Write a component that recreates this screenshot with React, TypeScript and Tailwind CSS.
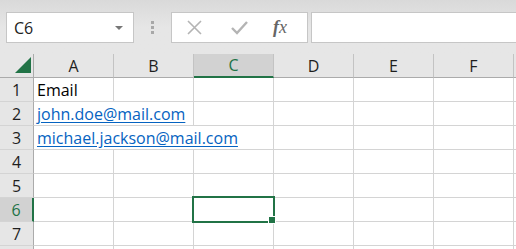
const COLS = ['A', 'B', 'C', 'D', 'E', 'F', ''];

const font = { fontFamily: '"Open Sans", "Noto Sans", Arial, sans-serif' };

function HeaderCell({ label, active }: { label: string; active?: boolean }) {
  return (
    <div
      className={`flex items-center justify-center border-r border-[#c3c3c3] text-[16px] text-[#1e1e1e] ${
        active ? 'bg-[#d2d2d2] border-b-2 border-b-[#217346]' : 'bg-[#e6e6e6] border-b border-b-[#ababab]'
      }`}
    >
      <span className={active ? 'text-[#217346]' : ''}>{label}</span>
    </div>
  );
}

function RowHeader({ n, active }: { n: number; active?: boolean }) {
  return (
    <div
      className={`flex items-center justify-center border-b border-[#d4d4d4] text-[16px] ${
        active
          ? 'bg-[#d2d2d2] border-r-2 border-r-[#217346] text-[#217346]'
          : 'bg-[#e6e6e6] border-r border-r-[#ababab] text-[#1e1e1e]'
      }`}
    >
      {n < 8 ? n : ''}
    </div>
  );
}

function Cell({ span = 1, children, selected }: { span?: number; children?: React.ReactNode; selected?: boolean }) {
  const spanCls = span === 3 ? 'col-span-3' : span === 2 ? 'col-span-2' : '';
  return (
    <div className={`relative flex items-center overflow-visible border-r border-b border-[#d4d4d4] bg-white pl-[3px] text-[16px] ${spanCls}`}>
      {children}
      {selected && (
        <div className="absolute -top-[2px] -left-[2px] -right-[2px] -bottom-[2px] z-10 border-2 border-[#217346]">
          <div className="absolute -right-[3px] -bottom-[3px] h-[6px] w-[6px] border border-white bg-[#217346] box-content" />
        </div>
      )}
    </div>
  );
}

function Link({ children }: { children: React.ReactNode }) {
  return <span className="whitespace-nowrap text-[#0563c1] underline underline-offset-2">{children}</span>;
}

function Toolbar() {
  return (
    <div className="flex h-[54px] items-start bg-gradient-to-b from-[#d9d9d9] via-[#e6e6e6] to-[#e6e6e6] pt-[12px]">
      <div className="ml-[6px] flex h-[31px] w-[128px] items-center justify-between border border-[#c6c6c6] bg-white pl-[7px] pr-[10px] text-[16px] text-[#222]">
        <span>C6</span>
        <svg width="8" height="4" viewBox="0 0 8 4">
          <path d="M0 0 L8 0 L4 4 Z" fill="#777" />
        </svg>
      </div>
      <div className="ml-[16px] flex h-[31px] w-[4px] flex-col items-center justify-center gap-[2px]">
        <div className="h-[3px] w-[3px] bg-[#a8a8a8]" />
        <div className="h-[3px] w-[3px] bg-[#a8a8a8]" />
        <div className="h-[3px] w-[3px] bg-[#a8a8a8]" />
      </div>
      <div className="ml-[17px] flex h-[31px] w-[137px] items-center border border-[#c6c6c6] bg-white">
        <svg className="ml-[15px]" width="15" height="15" viewBox="0 0 15 15">
          <path d="M1 1 L14 14 M14 1 L1 14" stroke="#b4b4b4" strokeWidth="1.6" />
        </svg>
        <svg className="ml-[29px]" width="17" height="14" viewBox="0 0 17 14">
          <path d="M1 7 L6 12 L16 1" stroke="#b4b4b4" strokeWidth="2.4" fill="none" />
        </svg>
        <span
          className="ml-[25px] text-[18px] italic text-[#666]"
          style={{ fontFamily: '"Liberation Serif", "DejaVu Serif", serif' }}
        >
          <span className="font-bold">f</span>x
        </span>
      </div>
      <div className="ml-[3px] h-[31px] flex-1 border border-r-0 border-[#c6c6c6] bg-white" />
    </div>
  );
}

export default function App() {
  const rows = [1, 2, 3, 4, 5, 6, 7, 8];
  return (
    <div className="h-[249px] w-[516px] overflow-hidden bg-[#e6e6e6]" style={font}>
      <Toolbar />
      <div className="grid grid-cols-[34px_repeat(6,80px)_1fr] auto-rows-[24px]">
        <div className="relative border-r border-b border-[#ababab] bg-[#e6e6e6]">
          <svg className="absolute left-[15px] top-[3px]" width="16" height="16" viewBox="0 0 16 16">
            <path d="M16 0 L16 16 L0 16 Z" fill="#217346" />
          </svg>
        </div>
        {COLS.map((c) => (
          <HeaderCell key={c || 'g'} label={c} active={c === 'C'} />
        ))}
        {rows.map((r) => (
          <Row key={r} r={r} />
        ))}
      </div>
    </div>
  );
}

function Row({ r }: { r: number }) {
  const cells: React.ReactNode[] = [];
  if (r === 1) {
    cells.push(<Cell key="a"><span className="text-black">Email</span></Cell>);
    for (let i = 1; i < 7; i++) cells.push(<Cell key={i} />);
  } else if (r === 2) {
    cells.push(<Cell key="a" span={2}><Link>john.doe@mail.com</Link></Cell>);
    for (let i = 2; i < 7; i++) cells.push(<Cell key={i} />);
  } else if (r === 3) {
    cells.push(<Cell key="a" span={3}><Link>michael.jackson@mail.com</Link></Cell>);
    for (let i = 3; i < 7; i++) cells.push(<Cell key={i} />);
  } else {
    for (let i = 0; i < 7; i++) cells.push(<Cell key={i} selected={r === 6 && i === 2} />);
  }
  return (
    <>
      <RowHeader n={r} active={r === 6} />
      {cells}
    </>
  );
}
